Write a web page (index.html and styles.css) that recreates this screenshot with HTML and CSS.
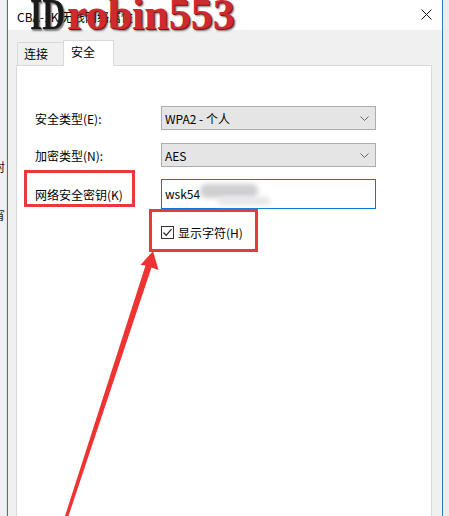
FILE: index.html
```html
<!DOCTYPE html>
<html lang="zh">
<head>
<meta charset="utf-8">
<title>无线网络属性</title>
<link rel="stylesheet" href="styles.css">
</head>
<body>
<div class="screen">
  <div class="edge-left">
    <span class="frag frag-a">封</span>
    <span class="frag frag-b">宵</span>
  </div>
  <div class="window">
    <div class="titlebar">
      <span class="title">CBA-1K 无线网络属性</span>
      <svg class="close" width="11" height="11" viewBox="0 0 11 11"><path d="M0.5 0.5 L10.5 10.5 M10.5 0.5 L0.5 10.5" stroke="#111" stroke-width="1" fill="none"/></svg>
    </div>
    <div class="body">
      <div class="tabs">
        <div class="tab">连接</div>
        <div class="tab active">安全</div>
      </div>
      <div class="panel">
        <div class="form">
          <span class="label">安全类型(E):</span>
          <div class="select"><span>WPA2 - 个人</span><svg width="9" height="5" viewBox="0 0 9 5"><path d="M0.5 0.5 L4.5 4.5 L8.5 0.5" stroke="#666" fill="none"/></svg></div>
          <span class="label">加密类型(N):</span>
          <div class="select"><span>AES</span><svg width="9" height="5" viewBox="0 0 9 5"><path d="M0.5 0.5 L4.5 4.5 L8.5 0.5" stroke="#666" fill="none"/></svg></div>
          <span class="label">网络安全密钥(K)</span>
          <div class="input"><span>wsk54</span><span class="blur"></span><span class="blur blur2"></span></div>
          <span></span>
          <div class="check">
            <span class="box"><svg width="11" height="11" viewBox="0 0 11 11"><path d="M1.5 5.5 L4.2 8.3 L9.5 2.2" stroke="#222" stroke-width="1.2" fill="none"/></svg></span>
            <span>显示字符(H)</span>
          </div>
        </div>
      </div>
    </div>
  </div>
  <div class="edge-right"></div>

  <div class="watermark"><span class="wm-id">ID</span><span class="wm-name">robin553</span></div>
  <div class="mark mark-key"></div>
  <div class="mark mark-check"></div>
  <svg class="arrow" width="449" height="516" viewBox="0 0 449 516">
    <polygon points="153,251 158.5,270 151.5,267.5 68.5,516 65,516 145.5,265.5 140.5,265" fill="#ee3333"/>
  </svg>
</div>
</body>
</html>
```
FILE: styles.css
```css
* { box-sizing: border-box; }
html, body { margin: 0; padding: 0; }
body {
  width: 449px;
  height: 516px;
  overflow: hidden;
  font-family: "Noto Sans CJK SC", "Noto Sans", sans-serif;
  font-size: 12px;
  color: #000;
  background: #ececec;
}
.screen {
  position: relative;
  display: flex;
  width: 449px;
  height: 516px;
  overflow: hidden;
}
.edge-left {
  width: 7px;
  flex: none;
  background: #f0f0f0;
  border-right: 1px solid #e2e2e2;
  display: flex;
  flex-direction: column;
  overflow: hidden;
}
.frag {
  display: block;
  margin-left: -7px;
  line-height: 14px;
  font-size: 12px;
  color: #222;
}
.frag-a { margin-top: 160px; }
.frag-b { margin-top: 34px; }
.window {
  width: 436px;
  flex: none;
  border-left: 1px solid #2b78c5;
  border-right: 1px solid #2b78c5;
  background: #f0f0f0;
  display: flex;
  flex-direction: column;
}
.titlebar {
  height: 30px;
  background: #fff;
  display: flex;
  align-items: center;
  justify-content: space-between;
  padding: 0 10px 0 9px;
  flex: none;
}
.title { font-size: 12px; line-height: 14px; margin-top: 3px; }
.close { margin-top: -1px; }
.body {
  padding: 10px 10px 0 8px;
  flex: 1;
  display: flex;
  flex-direction: column;
}
.tabs {
  display: flex;
  align-items: flex-end;
  height: 25px;
  padding-left: 1px;
  position: relative;
  z-index: 1;
}
.tab {
  height: 23px;
  width: 47px;
  border: 1px solid #d9d9d9;
  border-bottom: none;
  background: #f0f0f0;
  padding-left: 6px;
  line-height: 22px;
  font-size: 12px;
}
.tab.active {
  height: 26px;
  width: 51px;
  margin-left: -1px;
  margin-bottom: -1px;
  background: #fff;
  padding-left: 7px;
  line-height: 22px;
}
.panel {
  flex: 1;
  background: #fff;
  border: 1px solid #d9d9d9;
  border-bottom: none;
}
.form {
  display: grid;
  grid-template-columns: 126px 215px;
  grid-template-rows: 24px 24px 29px 33px;
  row-gap: 13px;
  padding: 40px 0 0 18px;
}
.form > :nth-child(5), .form > :nth-child(6) { margin-top: -1px; }
.label {
  display: flex;
  align-items: center;
  font-size: 12px;
}
.select {
  display: flex;
  align-items: center;
  justify-content: space-between;
  background: #e5e5e5;
  border: 1px solid #adadad;
  padding: 0 6px 0 3px;
  font-size: 12px;
}
.input {
  display: flex;
  align-items: center;
  border: 1px solid #0a78d2;
  background: #fff;
  padding: 0 0 2px 3px;
  font-size: 12px;
  position: relative;
}
.blur {
  display: inline-block;
  width: 58px;
  height: 14px;
  margin-left: 0;
  background: #cfcfd1;
  border-radius: 6px;
  filter: blur(2.5px);
  margin-top: -4px;
}
.blur2 {
  width: 52px;
  height: 8px;
  margin-left: -40px;
  margin-top: 16px;
  background: #e6e6e8;
}
.check {
  display: flex;
  align-items: center;
  gap: 4px;
  margin-top: -13px;
  margin-left: 0;
  font-size: 12px;
}
.box {
  width: 13px;
  height: 13px;
  border: 1px solid #333;
  display: flex;
  align-items: center;
  justify-content: center;
  background: #fff;
}
.watermark {
  position: absolute;
  left: 30px;
  top: -7px;
  font-family: "Liberation Serif", serif;
  font-weight: bold;
  font-size: 44px;
  line-height: 44px;
  white-space: nowrap;
  pointer-events: none;
}
.wm-id {
  display: inline-block;
  color: #1a1a1a;
  transform: scaleX(0.72);
  transform-origin: left center;
  margin-right: -12px;
  text-shadow: 1px 1px 0 #777, 2px 2px 2px rgba(0,0,0,0.5);
}
.wm-name {
  color: #cf2a2e;
  text-shadow: 1px 1px 0 #7a1515, 2px 2px 2px rgba(0,0,0,0.55);
}
.mark {
  position: absolute;
  border: 3px solid #e83a3e;
  pointer-events: none;
}
.mark-key { left: 24px; top: 170px; width: 111px; height: 37px; }
.mark-check { left: 149px; top: 209px; width: 109px; height: 43px; }
.arrow {
  position: absolute;
  left: 0;
  top: 0;
  pointer-events: none;
}
```
